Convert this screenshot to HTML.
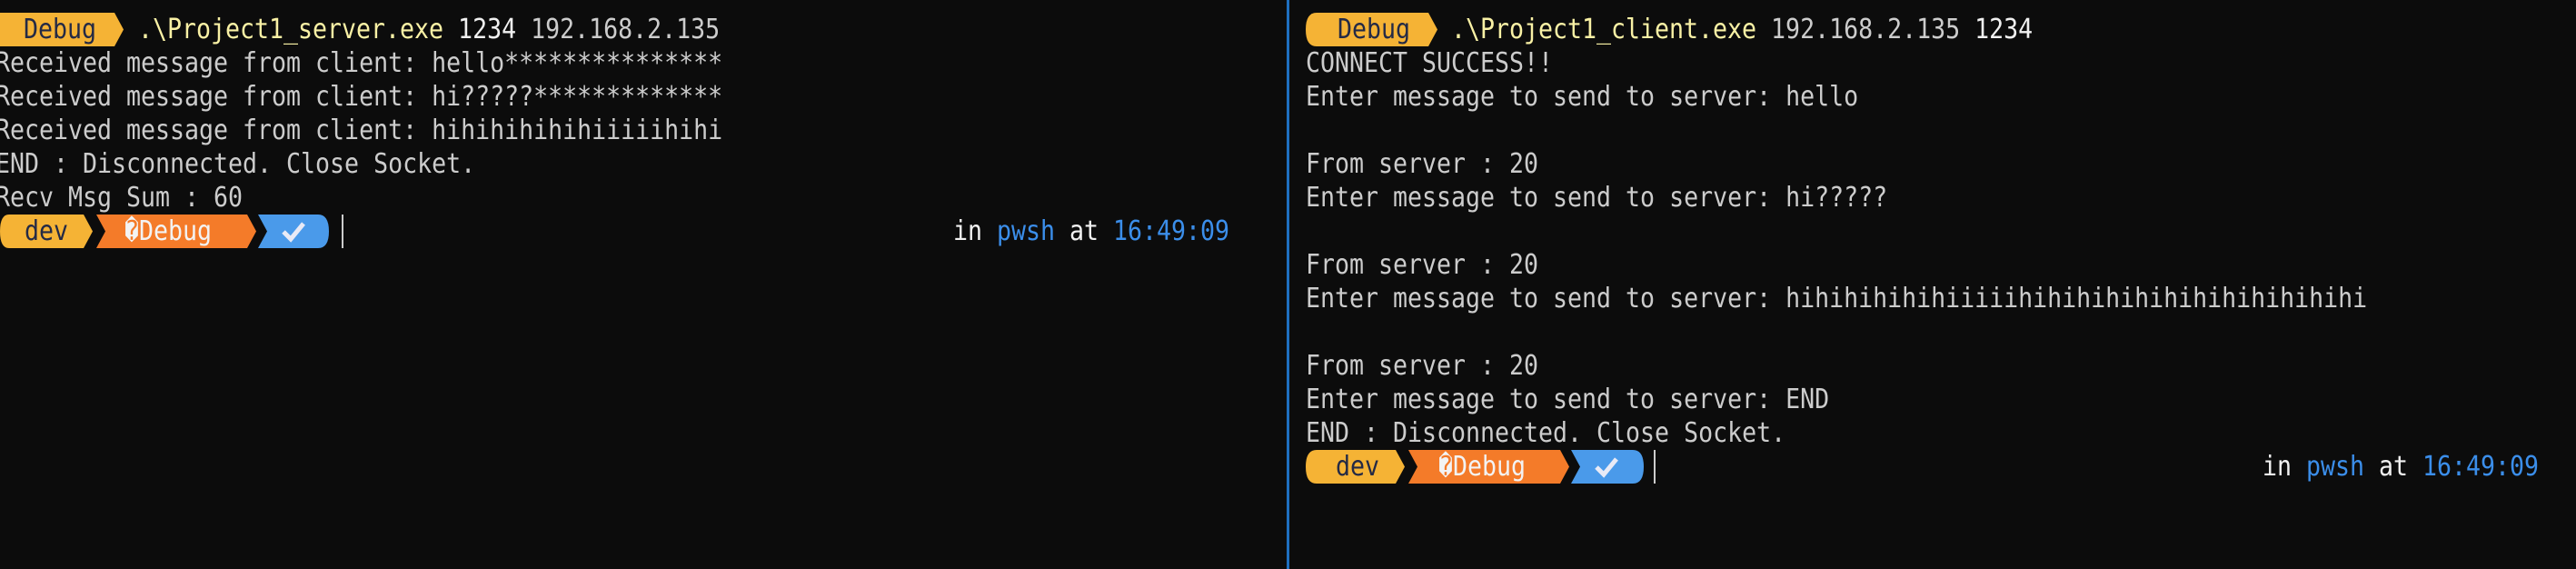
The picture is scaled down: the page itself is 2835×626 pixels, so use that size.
<!DOCTYPE html>
<html><head><meta charset="utf-8"><style>
html,body{margin:0;padding:0;background:#0c0c0c;width:2835px;height:626px;overflow:hidden;position:relative}
.l{position:absolute;height:37px;line-height:37px;font-family:"DejaVu Sans Mono","Liberation Mono",monospace;font-size:30px;color:#cccccc;white-space:pre;transform:scaleX(.886);transform-origin:0 0}
.y{color:#f9f1a5}.w{color:#f0f0f0}.b{color:#3b8eea}
svg{position:absolute}
</style></head><body>
<div style="position:absolute;left:1416px;top:0;width:3px;height:626px;background:#1f6fc0"></div>

<!-- left panel -->
<svg style="left:0;top:14px" width="150" height="37"><path d="M0,0 H126 L136,18.5 L126,37 H0 Z" fill="#f5b335"/></svg>
<div class="l" style="left:26px;top:14px;color:#242a45">Debug</div>
<div class="l" style="left:152px;top:14px"><span class="y">.\Project1_server.exe</span> <span class="w">1234</span> 192.168.2.135</div>
<div class="l" style="left:-5px;top:51px">Received message from client: hello***************</div>
<div class="l" style="left:-5px;top:88px">Received message from client: hi?????*************</div>
<div class="l" style="left:-5px;top:125px">Received message from client: hihihihihihiiiiihihi</div>
<div class="l" style="left:-5px;top:162px">END : Disconnected. Close Socket.</div>
<div class="l" style="left:-5px;top:199px">Recv Msg Sum : 60</div>
<svg style="left:0;top:236px" width="380" height="37">
<path d="M10,0 H92 L102,18.5 L92,37 H10 Q0,37 0,18.5 Q0,0 10,0Z" fill="#f5b335"/>
<path d="M106,0 H272 L282,18.5 L272,37 H106 L116,18.5 Z" fill="#f47b29"/>
<path d="M284,0 H350 Q362,0 362,18.5 Q362,37 350,37 H284 L294,18.5 Z" fill="#4a9aea"/>
<path d="M312,19 L320,27 L334,10" stroke="#e8eaf6" stroke-width="5" fill="none"/>
<rect x="376" y="0" width="2" height="37" fill="#cccccc"/>
</svg>
<div class="l" style="left:27px;top:236px;color:#242a45">dev</div>
<div class="l" style="left:137px;top:236px;color:#f3f3f3">�Debug</div>
<div class="l" style="left:1049px;top:236px"><span class="w">in</span> <span class="b">pwsh</span> <span class="w">at</span> <span class="b">16:49:09</span></div>

<!-- right panel -->
<svg style="left:1437px;top:14px" width="150" height="37"><path d="M12,0 H135 L145,18.5 L135,37 H12 Q0,37 0,18.5 Q0,0 12,0Z" fill="#f5b335"/></svg>
<div class="l" style="left:1472px;top:14px;color:#242a45">Debug</div>
<div class="l" style="left:1597px;top:14px"><span class="y">.\Project1_client.exe</span> 192.168.2.135 <span class="w">1234</span></div>
<div class="l" style="left:1437px;top:51px">CONNECT SUCCESS!!</div>
<div class="l" style="left:1437px;top:88px">Enter message to send to server: hello</div>
<div class="l" style="left:1437px;top:162px">From server : 20</div>
<div class="l" style="left:1437px;top:199px">Enter message to send to server: hi?????</div>
<div class="l" style="left:1437px;top:273px">From server : 20</div>
<div class="l" style="left:1437px;top:310px">Enter message to send to server: hihihihihihiiiiihihihihihihihihihihihihi</div>
<div class="l" style="left:1437px;top:384px">From server : 20</div>
<div class="l" style="left:1437px;top:421px">Enter message to send to server: END</div>
<div class="l" style="left:1437px;top:458px">END : Disconnected. Close Socket.</div>
<svg style="left:1437px;top:495px" width="390" height="37">
<path d="M12,0 H99 L109,18.5 L99,37 H12 Q0,37 0,18.5 Q0,0 12,0Z" fill="#f5b335"/>
<path d="M113,0 H280 L290,18.5 L280,37 H113 L123,18.5 Z" fill="#f47b29"/>
<path d="M292,0 H360 Q372,0 372,18.5 Q372,37 360,37 H292 L302,18.5 Z" fill="#4a9aea"/>
<path d="M320,19 L328,27 L342,10" stroke="#e8eaf6" stroke-width="5" fill="none"/>
<rect x="383" y="0" width="2" height="37" fill="#cccccc"/>
</svg>
<div class="l" style="left:1470px;top:495px;color:#242a45">dev</div>
<div class="l" style="left:1583px;top:495px;color:#f3f3f3">�Debug</div>
<div class="l" style="left:2490px;top:495px"><span class="w">in</span> <span class="b">pwsh</span> <span class="w">at</span> <span class="b">16:49:09</span></div>
</body></html>
